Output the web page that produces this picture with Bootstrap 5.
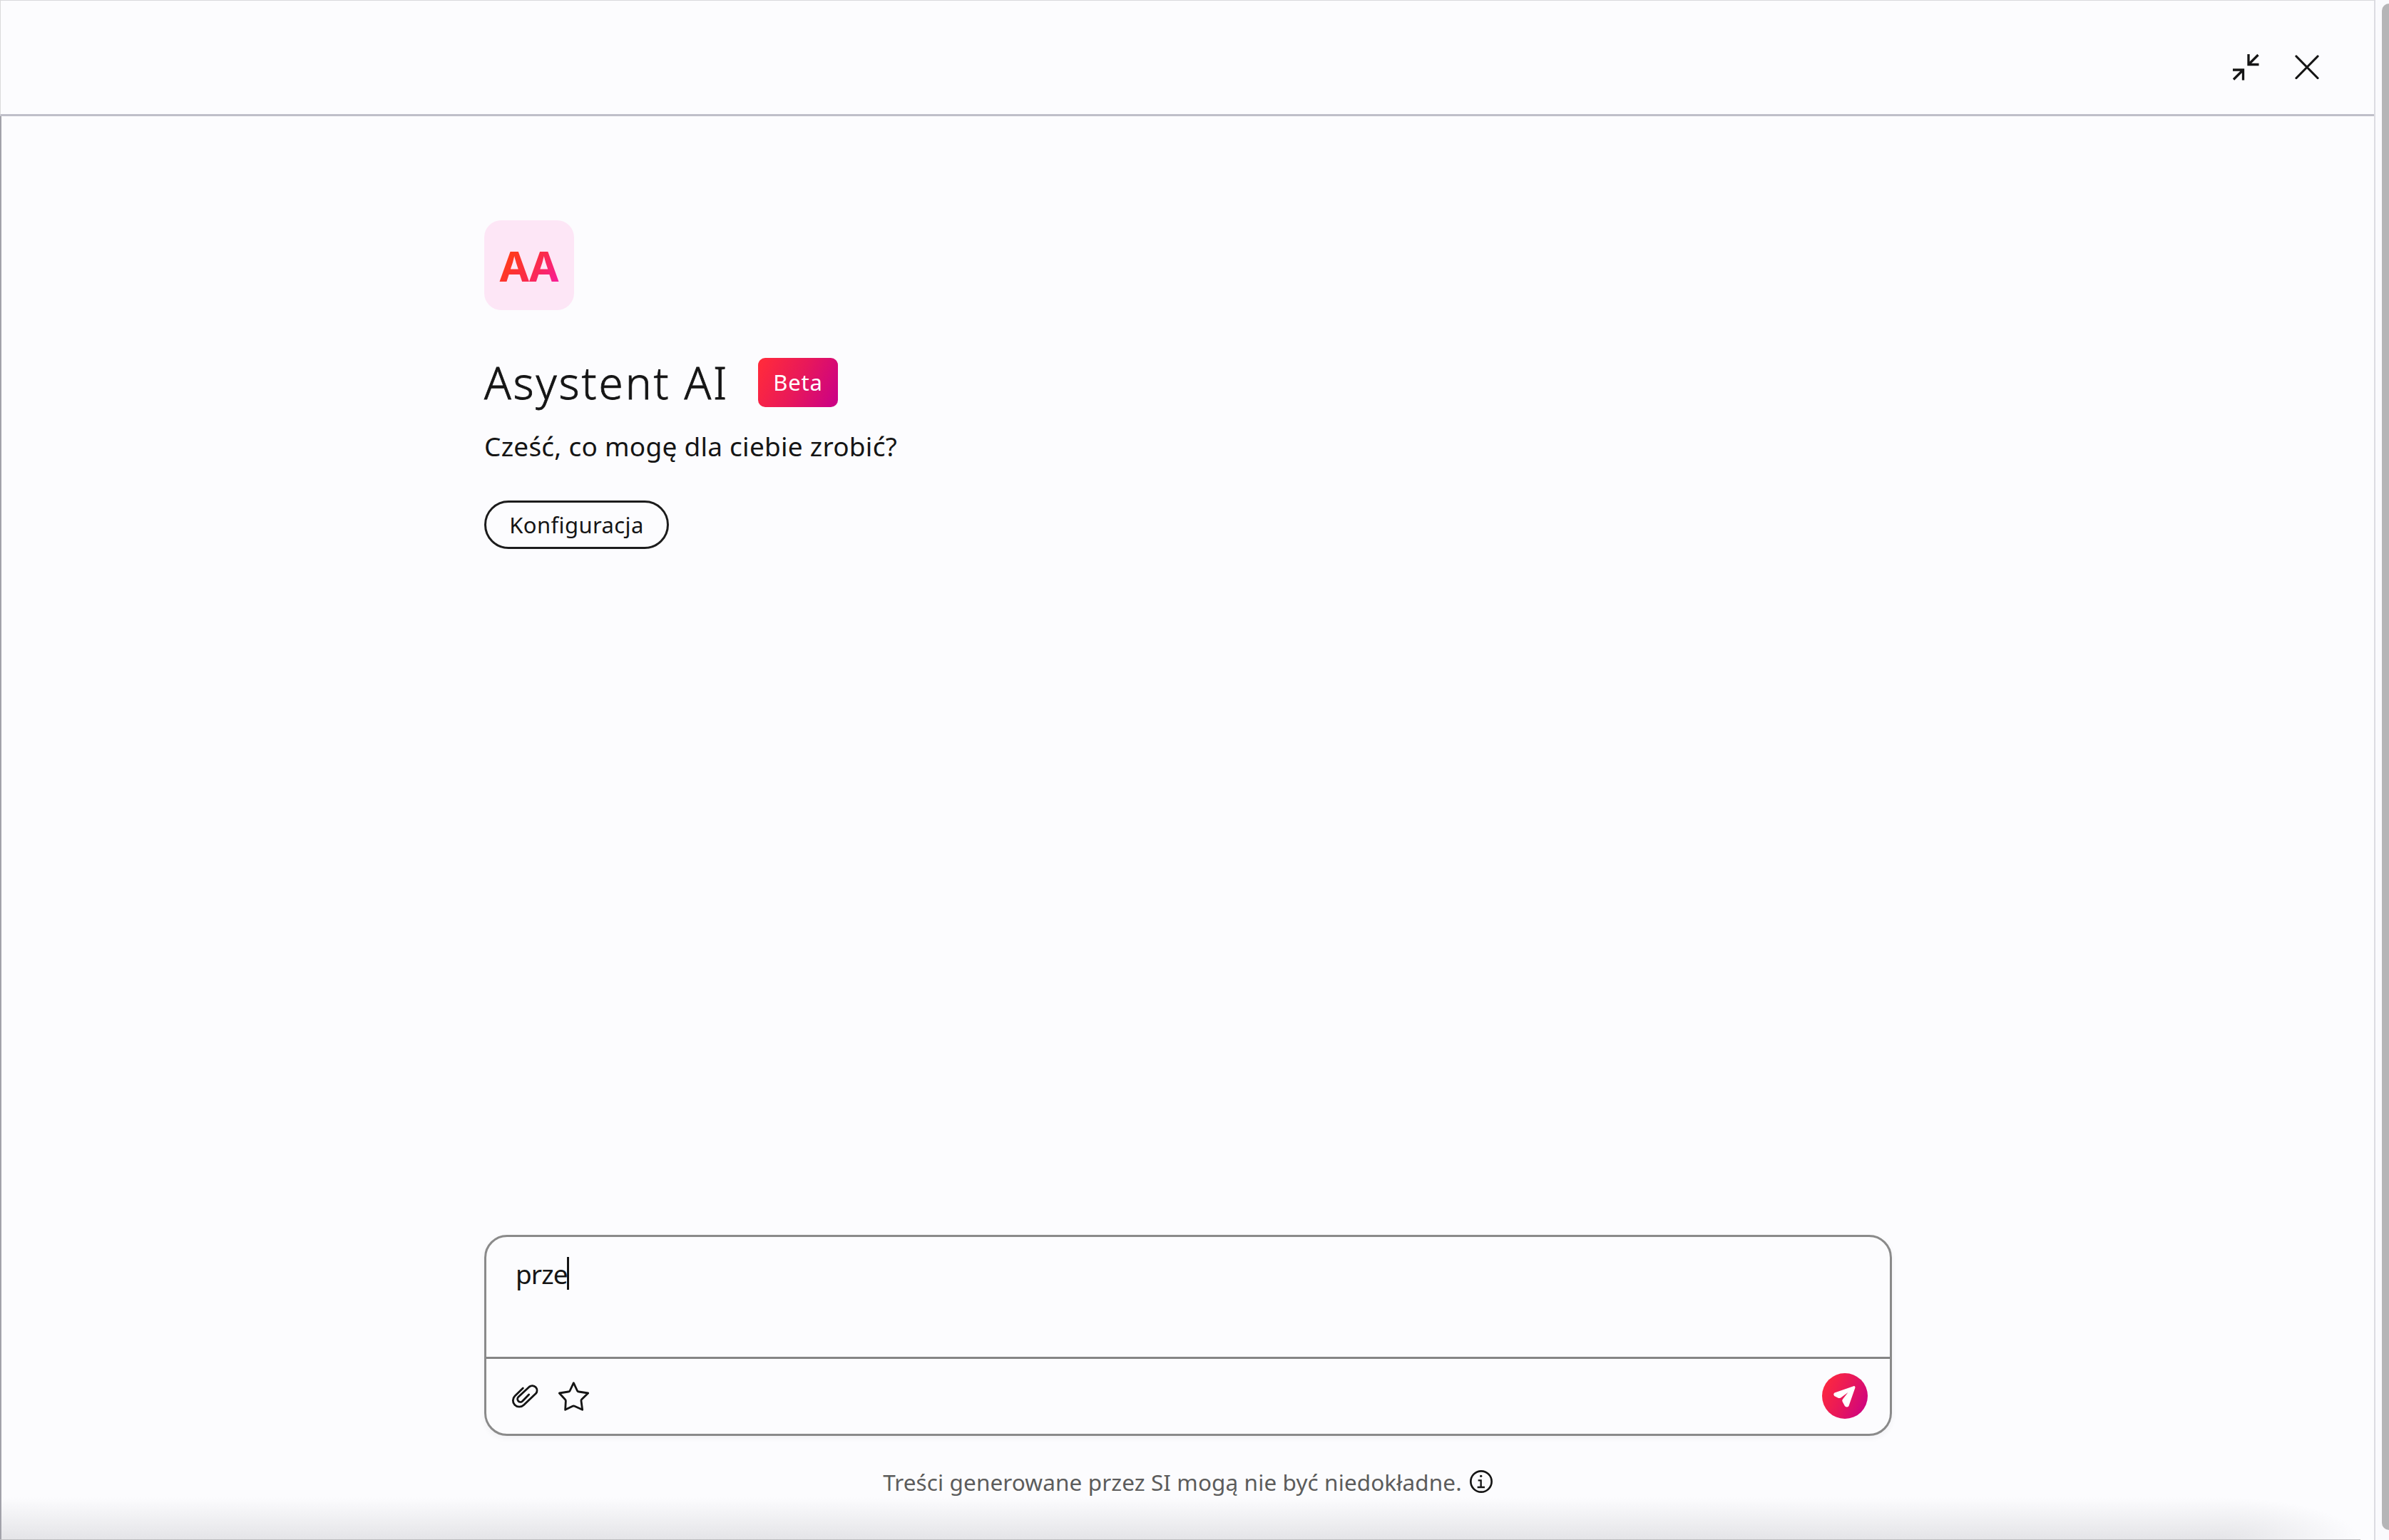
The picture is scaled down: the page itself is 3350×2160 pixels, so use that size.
<!DOCTYPE html>
<html lang="pl">
<head>
<meta charset="utf-8">
<title>Asystent AI</title>
<link href="https://cdn.jsdelivr.net/npm/bootstrap@5.3.0/dist/css/bootstrap.min.css" rel="stylesheet">
<style>
  body { background: #fcfcfe; color: #151515; font-family: "Noto Sans", sans-serif; }
  .panel { width: 3331px; border-right: 2px solid #dcdce2; border-top: 1px solid #d8d8dc; }
  .panel-head { height: 162px; border-bottom: 3px solid #bfbfc9; border-left: 1px solid #dadada; padding: 74px 76px 0 0; gap: 49px; }
  .panel-body { border-left: 2px solid #a2a2aa; padding-left: 677px; }
  .column { width: 1974px; padding-top: 146px; }
  .avatar { width: 126px; height: 126px; border-radius: 24px; background: #fde6f6; font-size: 60px; font-weight: 700; line-height: 126px; }
  .avatar span { background: linear-gradient(125deg, #ff3a1e 25%, #fb2c48 55%, #f81c9c 92%); -webkit-background-clip: text; background-clip: text; color: transparent; }
  .headline { margin-top: 67px; height: 69px; gap: 41px; }
  .headline h1 { font-size: 62px; font-weight: 300; line-height: 69px; letter-spacing: 2.9px; width: 343px; -webkit-text-stroke: .8px #151515; }
  .beta { width: 112px; height: 69px; border-radius: 10px; font-size: 31px; line-height: 69px; letter-spacing: .8px; color: #fff; }
  .hot { background: linear-gradient(115deg, #ff2a3c 5%, #e8185a 50%, #cc0284 95%); }
  .intro { margin-top: 30px; font-size: 37px; line-height: 50px; letter-spacing: .25px; }
  .config { margin-top: 51px; width: 259px; height: 68px; border: 3px solid #1c1c1c; border-radius: 34px; font-size: 31px; line-height: 62px; letter-spacing: .4px; color: #151515; }
  .composer { height: 282px; border: 3px solid #8a8a8a; border-radius: 32px; box-shadow: 0 3px 9px rgba(40,40,60,.05); }
  .entry { height: 168px; padding: 27px 41px; font-size: 37px; line-height: 50px; letter-spacing: -.9px; }
  .caret { width: 3px; height: 46px; margin: 1px 0 0 -1px; background: #151515; }
  .tools { border-top: 3px solid #858585; padding: 0 31px 2px 28px; }
  .send { width: 64px; height: 64px; }
  .note { height: 146px; padding-top: 43px; font-size: 31.5px; line-height: 44px; letter-spacing: .1px; color: #5c5c5c; gap: 10px; }
  .info { margin-top: 4px; }
  .fade-edge { height: 60px; background: radial-gradient(ellipse 200px 60px at 0 100%, rgba(165,165,172,.28), rgba(165,165,172,0)) right top / 200px 60px no-repeat, linear-gradient(rgba(165,165,172,0), rgba(165,165,172,.28)) left top / calc(100% - 200px) 60px no-repeat; right: 40px; border-bottom: 1px solid #bdbdc0; }
  .rail { background: #fafafd; padding: 5px 0 14px 9px; }
  .thumb { background: #b5b5b7; border-radius: 10px 0 0 10px; }
  svg { display: block; fill: none; stroke: #151515; flex: none; }
</style>
</head>
<body class="vh-100 overflow-hidden d-flex position-relative">
<div class="panel d-flex flex-column h-100">
  <header class="panel-head d-flex justify-content-end flex-shrink-0">
    <svg width="38" height="38" viewBox="0 0 38 38" stroke-width="3.3"><path d="M36.500 2 23.500 15M23 1v14.500h14.500M2 36.500 15 23.500M1 23h14.500v14.500"/></svg>
    <svg width="36" height="36" viewBox="0 -1 36 36" stroke-width="3.2" stroke-linecap="round"><path d="M3 3 33 33.500M33 3 3 33.500"/></svg>
  </header>
  <main class="panel-body flex-grow-1">
    <div class="column h-100 d-flex flex-column">
      <div class="avatar text-center"><span>AA</span></div>
      <div class="headline d-flex">
        <h1 class="m-0 text-nowrap">Asystent AI</h1>
        <span class="beta hot text-center">Beta</span>
      </div>
      <p class="intro mb-0">Cześć, co mogę dla ciebie zrobić?</p>
      <button class="config btn p-0">Konfiguracja</button>
      <section class="composer mt-auto d-flex flex-column flex-shrink-0">
        <div class="entry d-flex"><span>prze</span><i class="caret"></i></div>
        <div class="tools d-flex align-items-center flex-grow-1">
          <svg width="130" height="65" class="me-auto" viewBox="0 0 390 195" stroke-width="8.500" stroke-linecap="round" stroke-linejoin="round">
            <path d="M70 66 36 99A26 26 0 0 0 73 137L125 88A20 20 0 0 0 97 60L51 103A12 12 0 0 0 68 121L95 93"/>
            <path d="M283 44 299 78Q301 81 305 81L344 87 317 113Q314 116 315 120L320 157 287 142Q283 140 279 142L248 157 250 120Q250 116 247 113L223 87 261 81Q265 81 267 78Z"/>
          </svg>
          <span class="send hot rounded-circle">
            <svg width="64" height="64" viewBox="32 34 190 190"><path fill="#fff" stroke="none" d="M163 88 84 116Q77 121 83 129L99 137Q107 140 113 134L140 114 118 142Q114 147 117 153L127 171Q136 179 143 171L170 94Q170 86 163 88Z"/></svg>
          </span>
        </div>
      </section>
      <div class="note d-flex justify-content-center flex-shrink-0">
        <span class="text-nowrap">Treści generowane przez SI mogą nie być niedokładne.</span>
        <svg class="info" width="34" height="34" viewBox="59 35 102 102" stroke-width="8"><circle cx="110" cy="86" r="44"/><path d="M97 81h12v29M94 110h31" stroke-width="7"/><circle cx="109" cy="63" r="5" fill="#151515" stroke="none"/></svg>
      </div>
    </div>
  </main>
</div>
<div class="rail flex-grow-1 h-100"><div class="thumb h-100"></div></div>
<div class="fade-edge position-absolute bottom-0 start-0"></div>
<script src="https://cdn.jsdelivr.net/npm/bootstrap@5.3.0/dist/js/bootstrap.bundle.min.js"></script>
</body>
</html>
